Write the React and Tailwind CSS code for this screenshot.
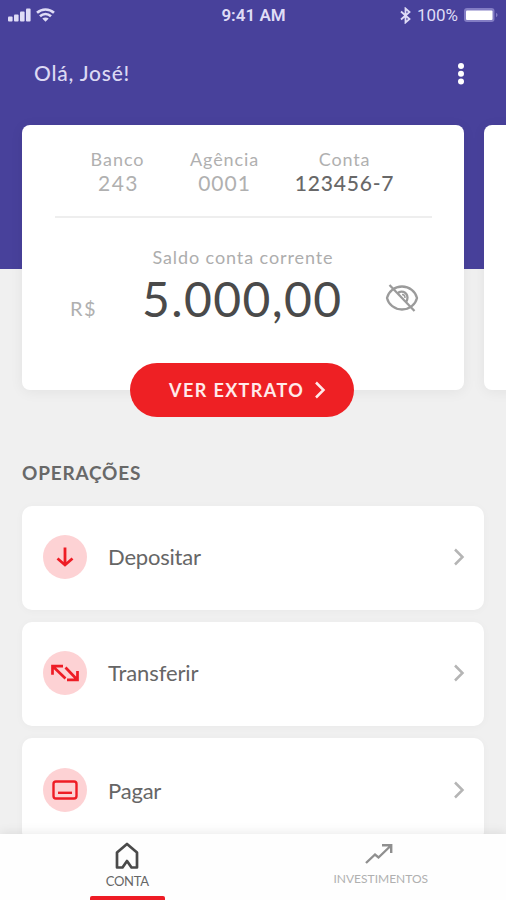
import React from 'react';

const StatusBar = () => (
  <div className="flex items-start h-[30px] pt-[6px] pl-[8px] pr-[7px] text-[#dfdcf6]">
    <div className="flex-1 flex items-center gap-[5px] h-[18px]">
      <svg width="23" height="14" viewBox="0 0 23 14" fill="currentColor">
        <rect x="0" y="8.5" width="4.6" height="5" rx="1" />
        <rect x="6" y="6.5" width="4.6" height="7" rx="1" />
        <rect x="12" y="3.5" width="4.6" height="10" rx="1" />
        <rect x="18" y="0.5" width="4.6" height="13" rx="1" />
      </svg>
      <svg width="19" height="14" viewBox="0 0 19 14" fill="none" stroke="currentColor" strokeWidth="2.6">
        <path d="M1 4.8C6 0.3 13 0.3 18 4.8" />
        <path d="M4 8.2c3.2-3 7.8-3 11 0" />
        <path d="M9.5 13.8 6.3 10.6c1.8-1.6 4.6-1.6 6.4 0z" fill="currentColor" stroke="none" />
      </svg>
    </div>
    <span className="text-[17px] leading-[18px] font-['Roboto','Liberation_Sans',sans-serif] font-semibold">
      9:41 AM
    </span>
    <div className="flex-1 flex items-center justify-end h-[18px]">
      <svg width="11" height="17" viewBox="0 0 11 17" fill="none" stroke="currentColor" strokeWidth="1.8">
        <path d="M1 4.5l8.5 7.5L5.5 15.5V1.5l4 3.5L1 12.5" />
      </svg>
      <span className="ml-[6px] text-[17px] leading-[18px] font-['Roboto','Liberation_Sans',sans-serif]">
        100%
      </span>
      <svg className="ml-[5px]" width="36" height="17" viewBox="0 0 36 17">
        <rect x="1" y="1" width="30.5" height="14" rx="3" fill="#837dc4" />
        <rect x="3" y="3.5" width="26.5" height="9.5" rx="1" fill="#fff" />
        <path d="M33 6c2 .6 2 3.4 0 4z" fill="#837dc4" />
      </svg>
    </div>
  </div>
);

const Header = () => (
  <header className="h-[269px] shrink-0 bg-[#48419b]">
    <StatusBar />
    <div className="flex items-center justify-between h-[87px] pl-[34px] pr-[41px]">
      <h1 className="pb-px text-[21px] font-medium tracking-[0.8px] text-[#dcd9f3]">Olá, José!</h1>
      <svg width="8" height="22" viewBox="0 0 8 22" fill="#fff">
        <circle cx="4" cy="3" r="3" />
        <circle cx="4" cy="10.8" r="3" />
        <circle cx="4" cy="18.6" r="3" />
      </svg>
    </div>
  </header>
);

const Chevron = ({ className }) => (
  <svg className={className} width="12" height="18" viewBox="0 0 12 18" fill="none" stroke="currentColor" strokeWidth="2.5">
    <path d="M2 1.5 9.5 9 2 16.5" />
  </svg>
);

const HiddenEye = () => (
  <svg width="34" height="30" viewBox="0 0 34 30" fill="none" stroke="#9b9b9b" strokeWidth="2.3">
    <path d="M2 15C3.5 8.5 9.5 3.5 17 3.5S30.5 8.500 32 15c-1.5 6.5-7.5 11.5-15 11.5S3.5 21.5 2 15z" />
    <path d="M12.5 10.5c3-3.5 9.5-2 10 4 0 2-.5 3.5-1.5 4.8" />
    <path d="M17 11.5c2 0 3 1.5 3 3.5" strokeWidth="1.5" />
    <path d="M4.5 2 29.5 28" />
  </svg>
);

const AccountCard = () => (
  <div className="flex flex-col items-center w-[442px] h-[265px] shrink-0 rounded-[8px] bg-white shadow-[0_2px_14px_rgba(0,0,0,0.06)]">
    <div className="flex w-[377px] h-[93px] pt-[22px] border-b-2 border-[#eeeeee] text-center text-[#b0b0b0]">
      <div className="w-[126px]">
        <p className="text-[18px] leading-[24px] tracking-[1px]">Banco</p>
        <p className="pl-[2px] text-[21px] leading-[24px] tracking-[1.5px]">243</p>
      </div>
      <div className="w-[88px]">
        <p className="text-[18px] leading-[24px] tracking-[0.9px]">Agência</p>
        <p className="text-[21px] leading-[24px] tracking-[1px]">0001</p>
      </div>
      <div className="w-[152px]">
        <p className="text-[18px] leading-[24px] tracking-[0.8px]">Conta</p>
        <p className="text-[21px] leading-[24px] tracking-[0.8px] font-medium text-[#686868]">123456-7</p>
      </div>
    </div>
    <p className="mt-[27px] text-[18px] leading-[24px] tracking-[0.9px] text-[#adadad]">Saldo conta corrente</p>
    <div className="flex items-center w-full h-[60px] pl-[48px]">
      <span className="w-[72px] pt-[18px] text-[20px] tracking-[1.5px] text-[#b0b0b0]">R$</span>
      <span className="w-[243px] text-[48px] leading-[60px] tracking-[1.4px] text-[#4a4a4a]">5.000,00</span>
      <div className="pb-[2px]">
        <HiddenEye />
      </div>
    </div>
  </div>
);

const DepositIcon = () => (
  <svg width="20" height="22" viewBox="0 0 20 22" fill="none" stroke="#ee1c25" strokeWidth="2.8">
    <path d="M10 1.5V19M2.5 12.5l7.5 6.5 7.5-6.5" />
  </svg>
);

const TransferIcon = () => (
  <svg width="30" height="20" viewBox="0 0 30 20" fill="none" stroke="#ee1c25" strokeWidth="2.7">
    <path d="M13 3.2H2.5v8.5M3 3.500 15.5 15.5" />
    <path d="M17 16.8h10.5V8M15.5 4.5 27 16.5" />
  </svg>
);

const PayIcon = () => (
  <svg width="26" height="20" viewBox="0 0 26 20" fill="none" stroke="#ee1c25" strokeWidth="2.4">
    <rect x="1.5" y="1.5" width="23" height="17" rx="2.5" />
    <path d="M6 12.8h14" />
  </svg>
);

const operations = [
  { label: 'Depositar', icon: DepositIcon, rowClass: 'pb-[2px]', textClass: 'tracking-[-0.2px]' },
  { label: 'Transferir', icon: TransferIcon, rowClass: 'pb-[2px]', textClass: 'tracking-[-0.1px]' },
  { label: 'Pagar', icon: PayIcon, rowClass: '', textClass: 'pt-[2px] tracking-[-0.2px]' },
];

const BottomNav = () => (
  <nav className="absolute inset-x-0 bottom-0 flex h-[66px] px-px bg-[#fefefe] shadow-[0_-2px_10px_rgba(0,0,0,0.08)]">
    <div className="flex flex-col items-center w-[254px] pt-[8px]">
      <svg width="26" height="28" viewBox="0 0 26 28" fill="none" stroke="#4a4a4a" strokeWidth="2.7" strokeLinejoin="round">
        <path d="M13 2 3 10.5V25.5h5.5L13 19l4.5 6.5H23V10.5z" />
      </svg>
      <span className="mt-[3px] text-[13px] leading-[16px] tracking-[-0.3px] text-[#666666]">CONTA</span>
      <div className="mt-auto w-[75px] h-[4px] rounded-t-[2px] bg-[#ee1c25]" />
    </div>
    <div className="flex flex-col items-center w-[253px] pt-[9px]">
      <svg width="28" height="22" viewBox="0 0 28 22" fill="none" stroke="#8f8f8f" strokeWidth="2.4">
        <path d="M1 20 10 11.5l3.5 3L26 2.5M17 2.3h9.2V10" />
      </svg>
      <span className="mt-[6px] pl-[3px] text-[12px] leading-[16px] text-[#b0b0b0]">INVESTIMENTOS</span>
    </div>
  </nav>
);

const App = () => {
  return (
    <div className="relative flex flex-col w-[506px] h-[900px] overflow-hidden bg-[#f0f0f0] font-['Lato','Liberation_Sans',sans-serif]">
      <Header />

      <section className="flex gap-[20px] -mt-[144px] pl-[22px]">
        <AccountCard />
        <div className="w-[442px] h-[265px] shrink-0 rounded-[8px] bg-white shadow-[0_2px_14px_rgba(0,0,0,0.06)]" />
      </section>

      <button className="relative flex items-center shrink-0 w-[224px] h-[54px] -mt-[27px] ml-[130px] pl-[39px] rounded-full bg-[#ee2024] text-[#ffeaea]">
        <span className="text-[18px] font-bold tracking-[1.4px]">VER EXTRATO</span>
        <Chevron className="ml-[10px]" />
      </button>

      <h2 className="h-[89px] shrink-0 pt-[43px] pl-[22px] text-[19px] leading-[26px] font-bold tracking-[0.8px] text-[#686868]">
        OPERAÇÕES
      </h2>

      <ul className="flex flex-col gap-[12px] px-[22px]">
        {operations.map(({ label, icon: Icon, rowClass, textClass }) => (
          <li
            key={label}
            className={`flex items-center h-[104px] shrink-0 pl-[21px] pr-[19px] rounded-[10px] bg-white shadow-[0_1px_8px_rgba(0,0,0,0.03)] ${rowClass}`}
          >
            <div className="flex items-center justify-center w-[44px] h-[44px] rounded-full bg-[#fdd2d4]">
              <Icon />
            </div>
            <span className={`flex-1 ml-[21px] text-[22px] leading-[30px] text-[#666666] ${textClass}`}>{label}</span>
            <Chevron className="text-[#b5b5b5]" />
          </li>
        ))}
      </ul>

      <BottomNav />
    </div>
  );
};

export default App;
